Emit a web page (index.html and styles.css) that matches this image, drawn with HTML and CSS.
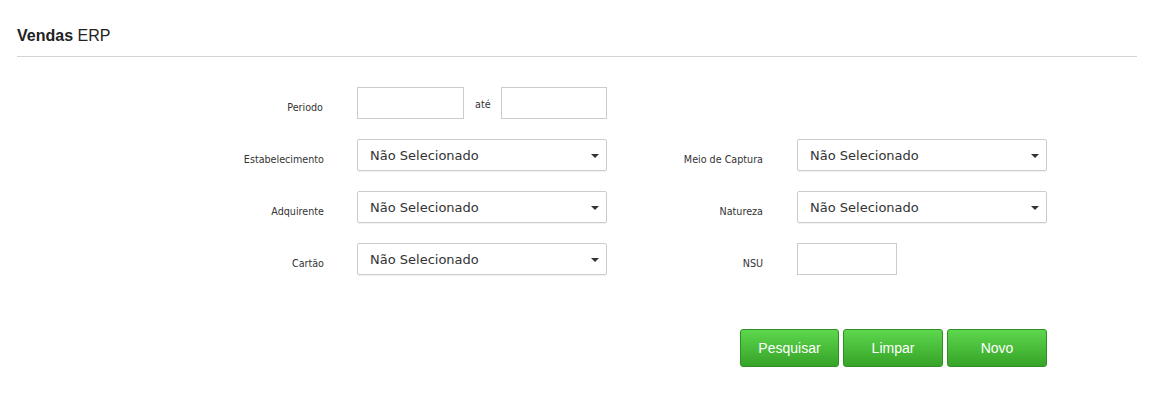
FILE: index.html
```html
<!DOCTYPE html>
<html lang="pt-BR">
<head>
<meta charset="utf-8">
<title>Vendas ERP</title>
<link rel="stylesheet" href="styles.css">
</head>
<body>
<div class="page">
  <div class="header"><b>Vendas</b> ERP</div>
  <form class="form">
    <label class="lbl">Periodo</label>
    <div class="field period">
      <input class="txt date" type="text">
      <span class="ate">até</span>
      <input class="txt date" type="text">
    </div>
    <div></div><div></div>

    <label class="lbl">Estabelecimento</label>
    <div class="field"><div class="sel"><span>Não Selecionado</span><i class="caret"></i></div></div>
    <label class="lbl">Meio de Captura</label>
    <div class="field"><div class="sel"><span>Não Selecionado</span><i class="caret"></i></div></div>

    <label class="lbl">Adquirente</label>
    <div class="field"><div class="sel"><span>Não Selecionado</span><i class="caret"></i></div></div>
    <label class="lbl">Natureza</label>
    <div class="field"><div class="sel"><span>Não Selecionado</span><i class="caret"></i></div></div>

    <label class="lbl">Cartão</label>
    <div class="field"><div class="sel"><span>Não Selecionado</span><i class="caret"></i></div></div>
    <label class="lbl">NSU</label>
    <div class="field"><input class="txt nsu" type="text"></div>
  </form>
  <div class="actions">
    <button class="btn" type="button">Pesquisar</button>
    <button class="btn" type="button">Limpar</button>
    <button class="btn" type="button">Novo</button>
  </div>
</div>
</body>
</html>
```
FILE: styles.css
```css
* { box-sizing: border-box; }
html, body { margin: 0; padding: 0; background: #fff; }
body { font-family: "DejaVu Sans", Verdana, sans-serif; color: #333; }

.page { padding: 0 17px; width: 1155px; }

.header {
  font-family: "Liberation Sans", Arial, sans-serif;
  font-size: 16px;
  line-height: 20px;
  color: #222;
  padding-top: 26px;
  padding-bottom: 10px;
  border-bottom: 1px solid #d3d3d3;
  width: 1120px;
}
.header b { font-weight: bold; }

.form {
  margin-top: 30px;
  display: grid;
  grid-template-columns: 340px 250px 190px 250px;
  grid-auto-rows: 32px;
  row-gap: 20px;
}

.lbl {
  font-size: 9.6px;
  line-height: 12px;
  text-align: right;
  padding-top: 15px;
  padding-right: 34px;
  color: #333;
}
.lbl:nth-of-type(even) { padding-right: 33px; }

.field { display: flex; align-items: stretch; }

.txt {
  border: 1px solid #ccc;
  height: 32px;
  margin: 0;
  padding: 0 6px;
  font-family: inherit;
  background: #fff;
}
.date { width: 107px; }
.period .date:last-child { width: 106px; }
.ate {
  width: 37px;
  font-size: 9.6px;
  line-height: 12px;
  padding-top: 12px;
  padding-left: 11px;
  color: #333;
}
.nsu { width: 100px; }

.sel {
  position: relative;
  width: 250px;
  height: 32px;
  border: 1px solid #ccc;
  border-radius: 2px;
  box-shadow: 0 1px 1px rgba(0,0,0,0.06);
  background: #fff;
  padding-left: 12px;
  padding-top: 1px;
  font-size: 13px;
  line-height: 30px;
  color: #333;
}
.caret {
  position: absolute;
  right: 7px;
  top: 14px;
  width: 0;
  height: 0;
  border-style: solid;
  border-width: 4px 4px 0 4px;
  border-color: #333 transparent transparent transparent;
}

.actions {
  display: flex;
  gap: 4px;
  margin-top: 54px;
  margin-left: 723px;
}
.btn {
  width: 100px;
  height: 38px;
  border: 1px solid #2f8f24;
  border-radius: 3px;
  background: linear-gradient(#5dd74d, #36a328);
  color: #fff;
  font-family: "Liberation Sans", Arial, sans-serif;
  font-size: 14px;
  padding: 0;
  cursor: pointer;
}
.actions .btn:first-child { width: 99px; }
```
